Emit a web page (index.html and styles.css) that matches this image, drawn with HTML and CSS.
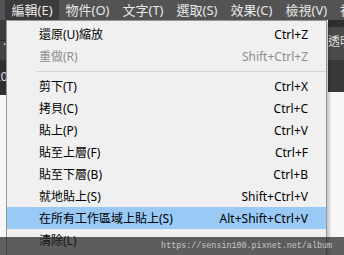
FILE: index.html
```html
<!DOCTYPE html>
<html lang="zh-Hant">
<head>
  <meta charset="UTF-8">
  <meta name="viewport" content="width=device-width, initial-scale=1.0">
  <title>編輯選單</title>
  <link rel="stylesheet" href="styles.css">
</head>
<body>
  <nav class="menubar">
    <div class="menubar-item active">編輯(E)</div>
    <div class="menubar-item">物件(O)</div>
    <div class="menubar-item">文字(T)</div>
    <div class="menubar-item">選取(S)</div>
    <div class="menubar-item">效果(C)</div>
    <div class="menubar-item">檢視(V)</div>
    <div class="menubar-item">視窗(W)</div>
  </nav>

  <div class="workspace">
    <div class="dock dock-left">
      <div class="band band-a"></div>
      <div class="band band-b">·</div>
      <div class="band band-c">20</div>
      <div class="canvas"></div>
    </div>
    <div class="center"></div>
    <div class="dock dock-right">
      <div class="band band-top"></div>
      <div class="band band-tab">透明度</div>
      <div class="band band-low"></div>
      <div class="canvas"></div>
    </div>
  </div>

  <div class="dropdown">
    <div class="menu-row"><span>還原(U)縮放</span><span>Ctrl+Z</span></div>
    <div class="menu-row disabled"><span>重做(R)</span><span>Shift+Ctrl+Z</span></div>
    <div class="menu-sep"></div>
    <div class="menu-row"><span>剪下(T)</span><span>Ctrl+X</span></div>
    <div class="menu-row"><span>拷貝(C)</span><span>Ctrl+C</span></div>
    <div class="menu-row"><span>貼上(P)</span><span>Ctrl+V</span></div>
    <div class="menu-row"><span>貼至上層(F)</span><span>Ctrl+F</span></div>
    <div class="menu-row"><span>貼至下層(B)</span><span>Ctrl+B</span></div>
    <div class="menu-row"><span>就地貼上(S)</span><span>Shift+Ctrl+V</span></div>
    <div class="menu-row selected"><span>在所有工作區域上貼上(S)</span><span>Alt+Shift+Ctrl+V</span></div>
    <div class="menu-row"><span>清除(L)</span><span></span></div>
  </div>

  <div class="watermark">https://sensin100.pixnet.net/album</div>
</body>
</html>
```

FILE: styles.css
```css
* {
  margin: 0;
  padding: 0;
  box-sizing: border-box;
}

body {
  width: 344px;
  height: 255px;
  overflow: hidden;
  position: relative;
  font-family: "Noto Sans", "Noto Sans CJK TC", sans-serif;
  background-color: #fafafa;
}

.menubar {
  display: flex;
  height: 20px;
  padding-left: 5px;
  background-color: #535353;
  overflow: hidden;
}

.menubar-item {
  padding: 0 6.5px;
  font-size: 13px;
  line-height: 20px;
  color: #e8e8e8;
  white-space: nowrap;
}

.menubar-item.active {
  background-color: #3b3b3b;
}

.workspace {
  display: flex;
  height: 235px;
}

.dock {
  display: flex;
  flex-direction: column;
  overflow: hidden;
  white-space: nowrap;
  font-size: 12px;
  color: #e0e0e0;
}

.dock-left {
  width: 6px;
}

.dock-right {
  width: 18px;
  padding-left: 2px;
}

.center {
  flex-grow: 1;
}

.band-a {
  height: 20px;
  background-color: #3c3c3c;
}

.band-b {
  height: 20px;
  background-color: #444;
  border-top: 1px solid #2a2a2a;
  line-height: 8px;
  padding-left: 3px;
}

.band-c {
  height: 35px;
  background-color: #2f2f2f;
  line-height: 34px;
  text-indent: -6px;
}

.band-top {
  height: 7px;
  background-color: #2e2e2e;
}

.band-tab {
  height: 33px;
  background-color: #4a4a4a;
  line-height: 30px;
}

.band-low {
  height: 32px;
  background-color: #383838;
}

.canvas {
  flex-grow: 1;
  background-color: #f7f7f7;
}

.dropdown {
  position: absolute;
  left: 6px;
  top: 20px;
  width: 321px;
  height: 250px;
  padding-top: 2px;
  background-color: #f0f0f0;
  border: 1px solid #979797;
  box-shadow: 2px 2px 3px rgba(0, 0, 0, 0.25);
  font-size: 12px;
  color: #000;
}

.menu-row {
  display: flex;
  justify-content: space-between;
  align-items: center;
  height: 22px;
  padding: 0 18px 0 32px;
  white-space: nowrap;
}

.menu-row.disabled {
  color: #8e8e8e;
}

.menu-row.selected {
  background-color: #99c9f5;
}

.menu-sep {
  height: 1px;
  margin: 4px 0 3px 29px;
  background-color: #d5d5d5;
}

.watermark {
  position: absolute;
  left: 0;
  right: 0;
  bottom: 0;
  height: 18px;
  padding-right: 12px;
  background-color: rgba(30, 30, 30, 0.7);
  color: #c8c8c8;
  font-family: "Liberation Mono", monospace;
  font-size: 8.4px;
  line-height: 18px;
  text-align: right;
}
```
